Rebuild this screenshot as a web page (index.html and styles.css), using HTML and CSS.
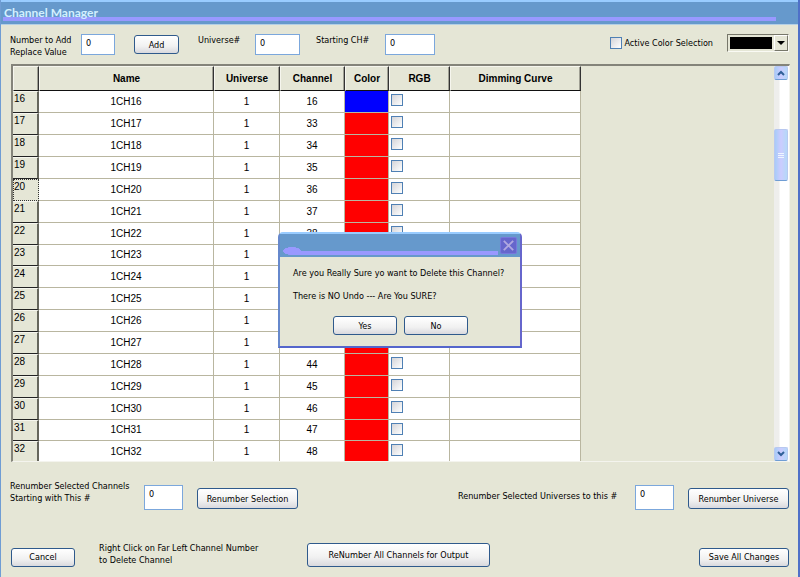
FILE: index.html
```html
<!DOCTYPE html>
<html lang="en">
<head>
<meta charset="utf-8">
<title>Channel Manager</title>
<link rel="stylesheet" href="styles.css">
</head>
<body>
<div class="window">
  <header class="titlebar"><h1>Channel Manager</h1></header>

  <form class="toolbar">
    <label for="add-count">Number to Add<br>Replace Value</label>
    <input class="field" id="add-count" value="0">
    <button class="btn add" type="button">Add</button>
    <label for="universe">Universe#</label>
    <input class="field" id="universe" value="0">
    <label for="start-ch">Starting CH#</label>
    <input class="field" id="start-ch" value="0">
    <div class="active-color">
      <input class="check" type="checkbox" id="active-color">
      <label for="active-color">Active Color Selection</label>
    </div>
    <div class="color-picker">
      <select aria-label="Active color"><option value="#000000"></option></select>
      <span class="drop"><svg viewBox="0 0 8 4"><path d="M0 0h8L4 4z"/></svg></span>
    </div>
  </form>

  <main class="grid-panel">
    <div class="grid-view">
      <table>
        <colgroup>
          <col class="c-num"><col class="c-name"><col class="c-universe"><col class="c-channel"><col class="c-color"><col class="c-rgb"><col class="c-curve">
        </colgroup>
        <thead>
          <tr><th></th><th>Name</th><th>Universe</th><th>Channel</th><th>Color</th><th>RGB</th><th>Dimming Curve</th></tr>
        </thead>
        <tbody id="rows"></tbody>
      </table>
    </div>
    <div class="scrollbar">
      <button class="arrow" type="button" aria-label="Scroll up"><svg viewBox="0 0 8 6"><path d="M1 5l3-3 3 3"/></svg></button>
      <div class="track"><div class="thumb"><i></i><i></i><i></i></div></div>
      <button class="arrow" type="button" aria-label="Scroll down"><svg viewBox="0 0 8 6"><path d="M1 1l3 3 3-3"/></svg></button>
    </div>
  </main>

  <footer class="actions">
    <div class="renumber">
      <label for="first-ch">Renumber Selected Channels<br>Starting with This #</label>
      <input class="field tall" id="first-ch" value="0">
      <button class="btn wide" type="button">Renumber Selection</button>
      <label class="to-universe" for="to-universe">Renumber Selected Universes to this #</label>
      <input class="field tall" id="to-universe" value="0">
      <button class="btn wide" type="button">Renumber Universe</button>
    </div>
    <div class="final">
      <button class="btn" type="button">Cancel</button>
      <p>Right Click on Far Left Channel Number<br>to Delete Channel</p>
      <button class="btn output" type="button">ReNumber All Channels for Output</button>
      <button class="btn save" type="button">Save All Changes</button>
    </div>
  </footer>
</div>

<div class="dialog" role="dialog" aria-labelledby="question">
  <div class="dialog-title">
    <button class="close" type="button" aria-label="Close"><svg viewBox="0 0 16 16"><path d="M3 3l10 10M13 3L3 13"/></svg></button>
  </div>
  <div class="dialog-body">
    <p id="question">Are you Really Sure yo want to Delete this Channel?</p>
    <p>There is NO Undo --- Are You SURE?</p>
    <div class="choices">
      <button class="btn" type="button">Yes</button>
      <button class="btn" type="button">No</button>
    </div>
  </div>
</div>
<script src="rows.js"></script>
</body>
</html>
```
FILE: rows.js
```js
const rows = [{ number: 16, channel: 16, color: "blue" }];
for (let n = 17; n <= 32; n++) rows.push({ number: n, channel: n + 16, color: "red" });

document.getElementById("rows").innerHTML = rows.map(r => `
  <tr>
    <th scope="row"${r.number === 20 ? ' class="focused"' : ""}>${r.number}</th>
    <td>1CH${r.number}</td>
    <td>1</td>
    <td>${r.channel}</td>
    <td class="${r.color}"></td>
    <td class="rgb"><input class="check" type="checkbox" aria-label="RGB for channel ${r.number}"></td>
    <td></td>
  </tr>`).join("");
```
FILE: styles.css
```css
* { box-sizing: border-box; }

:root {
  --face: #e5e6d6;
  --blue: #6699cc;
  --violet: #9999ff;
  --edge: #6666cc;
}

body {
  margin: 0;
  background: var(--face);
  color: #000;
  font: 9px/12px "DejaVu Sans Condensed", "DejaVu Sans", sans-serif;
}

p, h1 { margin: 0; }
input, button, select { font: inherit; color: inherit; margin: 0; }

.window {
  display: flex;
  flex-direction: column;
  height: 100vh;
  border-left: 1px solid #6f9dd4;
  border-right: 2px solid #4f70c8;
}

.titlebar {
  flex: none;
  height: 25px;
  padding: 5px 3px 0;
  border-top: 2px solid #99ccff;
  border-bottom: 1px solid #b4d0e6;
  background: linear-gradient(var(--violet), var(--violet)) 2px 15px / calc(100% - 24px) 4px no-repeat, var(--blue);
}
.titlebar h1 {
  font-family: Lato, sans-serif;
  font-size: 12px;
  line-height: 12px;
  font-weight: 700;
  color: #d2f0ff;
}

.btn {
  flex: none;
  width: 64px;
  height: 19px;
  padding: 0;
  border: 1px solid #2f5a8c;
  border-radius: 3px;
  background: linear-gradient(#fff, #f1f1f1 60%, #d9d9de);
  line-height: 16px;
  white-space: nowrap;
}
.field {
  flex: none;
  height: 21px;
  padding: 0 4px 3px;
  border: 1px solid #7ba7dc;
  background: #fff;
}
.field.tall { width: 39px; height: 25px; padding-bottom: 8px; }
.check {
  appearance: none;
  display: block;
  flex: none;
  width: 12px;
  height: 12px;
  border: 1px solid #4f80b4;
  background: linear-gradient(135deg, #d4d4d8, #fff);
}

.toolbar {
  flex: none;
  display: grid;
  grid-template-columns: 71px 53px 64px 57px 61px 69px 50px 1fr 62px;
  align-items: start;
  height: 39px;
  padding: 9px 9px 0;
}
.toolbar > label { white-space: nowrap; }
#add-count { width: 34px; }
#universe { width: 45px; }
#start-ch { width: 50px; }
.add { width: 45px; margin-top: 1px; }
.active-color {
  display: flex;
  justify-content: flex-end;
  gap: 2px;
  padding: 3px 14px 0 0;
}
.color-picker {
  display: flex;
  height: 18px;
  border: 1px solid #77776a;
  border-right-color: #fafaf4;
  border-bottom-color: #fafaf4;
}
.color-picker select {
  appearance: none;
  flex: 1;
  min-width: 0;
  padding: 0;
  border: 2px solid var(--face);
  border-radius: 0;
  background: #000;
}
.drop {
  display: grid;
  place-items: center;
  width: 14px;
  border: 1px solid #fff;
  border-right-color: #77776a;
  border-bottom-color: #77776a;
}
.drop svg { width: 8px; height: 4px; }

.grid-panel {
  flex: 1;
  min-height: 0;
  display: flex;
  margin: 0 8px 0 10px;
  border: 2px solid #84847a;
  border-right: 1px solid #f4f4ee;
  border-bottom: 1px solid #f4f4ee;
}
.grid-view { flex: 1; min-width: 0; overflow: hidden; }

table {
  table-layout: fixed;
  width: 568px;
  border-spacing: 0;
  font-family: "Liberation Sans", Arial, sans-serif;
  font-size: 10px;
}
.c-num { width: 26px; }
.c-name { width: 175px; }
.c-universe { width: 66px; }
.c-channel { width: 65px; }
.c-color { width: 44px; }
.c-rgb { width: 61px; }
.c-curve { width: 131px; }

th, td { padding: 0; text-align: center; }
thead th {
  height: 25px;
  border: 1px solid #f6f6ee;
  border-right: 1px solid #333;
  border-bottom: 1px solid #111;
  box-shadow: inset -1px 0 #a0a094;
}
tbody tr { height: 22px; }
tbody tr:nth-child(8n) { height: 21px; }
tbody th {
  padding: 1px 0 0 1px;
  border-top: 1px solid #f6f6ee;
  border-right: 2px solid #66665c;
  border-bottom: 1px solid #222;
  background: var(--face);
  font-weight: 400;
  text-align: left;
  vertical-align: top;
}
tbody th.focused { padding-left: 0; border: 1px dotted #333; }
td {
  border-right: 1px solid #b9b6a0;
  border-bottom: 1px solid #b9b6a0;
  background: #fff;
}
td.blue { background: #00f; }
td.red { background: #f00; }
td.rgb { padding: 3px 2px 0; vertical-align: top; }

.scrollbar {
  flex: none;
  display: flex;
  flex-direction: column;
  width: 15px;
  padding-right: 1px;
  background: linear-gradient(90deg, #eeeeec 5px, #fff 6px);
}
.arrow, .thumb {
  border: 1px solid #b8c8f0;
  border-bottom-color: #6f9dd4;
  border-radius: 2px;
  background: linear-gradient(90deg, #a8ccf8, #ccccff 50%, #b4d8f8);
}
.arrow {
  display: grid;
  place-items: center;
  width: 14px;
  height: 14px;
  padding: 0;
}
.arrow svg { width: 8px; height: 6px; fill: none; stroke: #2f5f98; stroke-width: 2; }
.track { flex: 1; padding-top: 49px; }
.thumb {
  display: flex;
  flex-direction: column;
  align-items: center;
  justify-content: center;
  gap: 1px;
  height: 52px;
}
.thumb i { width: 6px; height: 1px; background: #eef6ff; }

.actions {
  flex: none;
  height: 115px;
  padding: 18px 9px 0;
}
.renumber, .final { display: flex; align-items: center; }
.renumber { height: 36px; align-items: flex-end; padding-bottom: 6px; }
.renumber label { width: 134px; padding-bottom: 6px; white-space: nowrap; }
.renumber .to-universe { width: 177px; margin-left: auto; padding-bottom: 8px; }
.renumber .wide { width: 101px; height: 21px; margin: 0 0 1px 14px; }
.final { height: 24px; margin-top: 27px; padding-left: 1px; }
.final .btn { margin-top: 4px; }
.final p { width: 208px; margin-left: 24px; padding-bottom: 3px; white-space: nowrap; }
.final .output { width: 183px; height: 24px; margin-top: 0; }
.final .save { width: 90px; margin-left: auto; }

.dialog {
  position: absolute;
  inset: 232px 0 auto;
  width: 244px;
  margin: 0 auto;
  border: 2px solid #6688cc;
  border-top: 2px solid #99ccff;
  border-right-color: var(--edge);
  border-bottom-color: #5566cc;
  border-radius: 5px 5px 0 0;
  background: var(--face);
}
.dialog-title {
  display: flex;
  justify-content: flex-end;
  height: 23px;
  padding: 3px 3px 0;
  background:
    radial-gradient(ellipse 9px 4px at 12px 17px, var(--violet) 95%, transparent),
    linear-gradient(var(--violet), var(--violet)) 10px 17px / calc(100% - 32px) 4px no-repeat,
    var(--blue);
}
.close {
  width: 17px;
  height: 17px;
  padding: 0;
  border: 1px solid #7777dd;
  border-radius: 2px;
  background: var(--edge);
}
.close svg { display: block; width: 15px; height: 15px; fill: none; stroke: #b0a8e0; stroke-width: 2; }
.dialog-body { padding: 10px 0 11px 13px; white-space: nowrap; }
.dialog-body p + p { margin-top: 11px; }
.choices { display: flex; gap: 7px; margin: 14px 0 0 40px; }
```
